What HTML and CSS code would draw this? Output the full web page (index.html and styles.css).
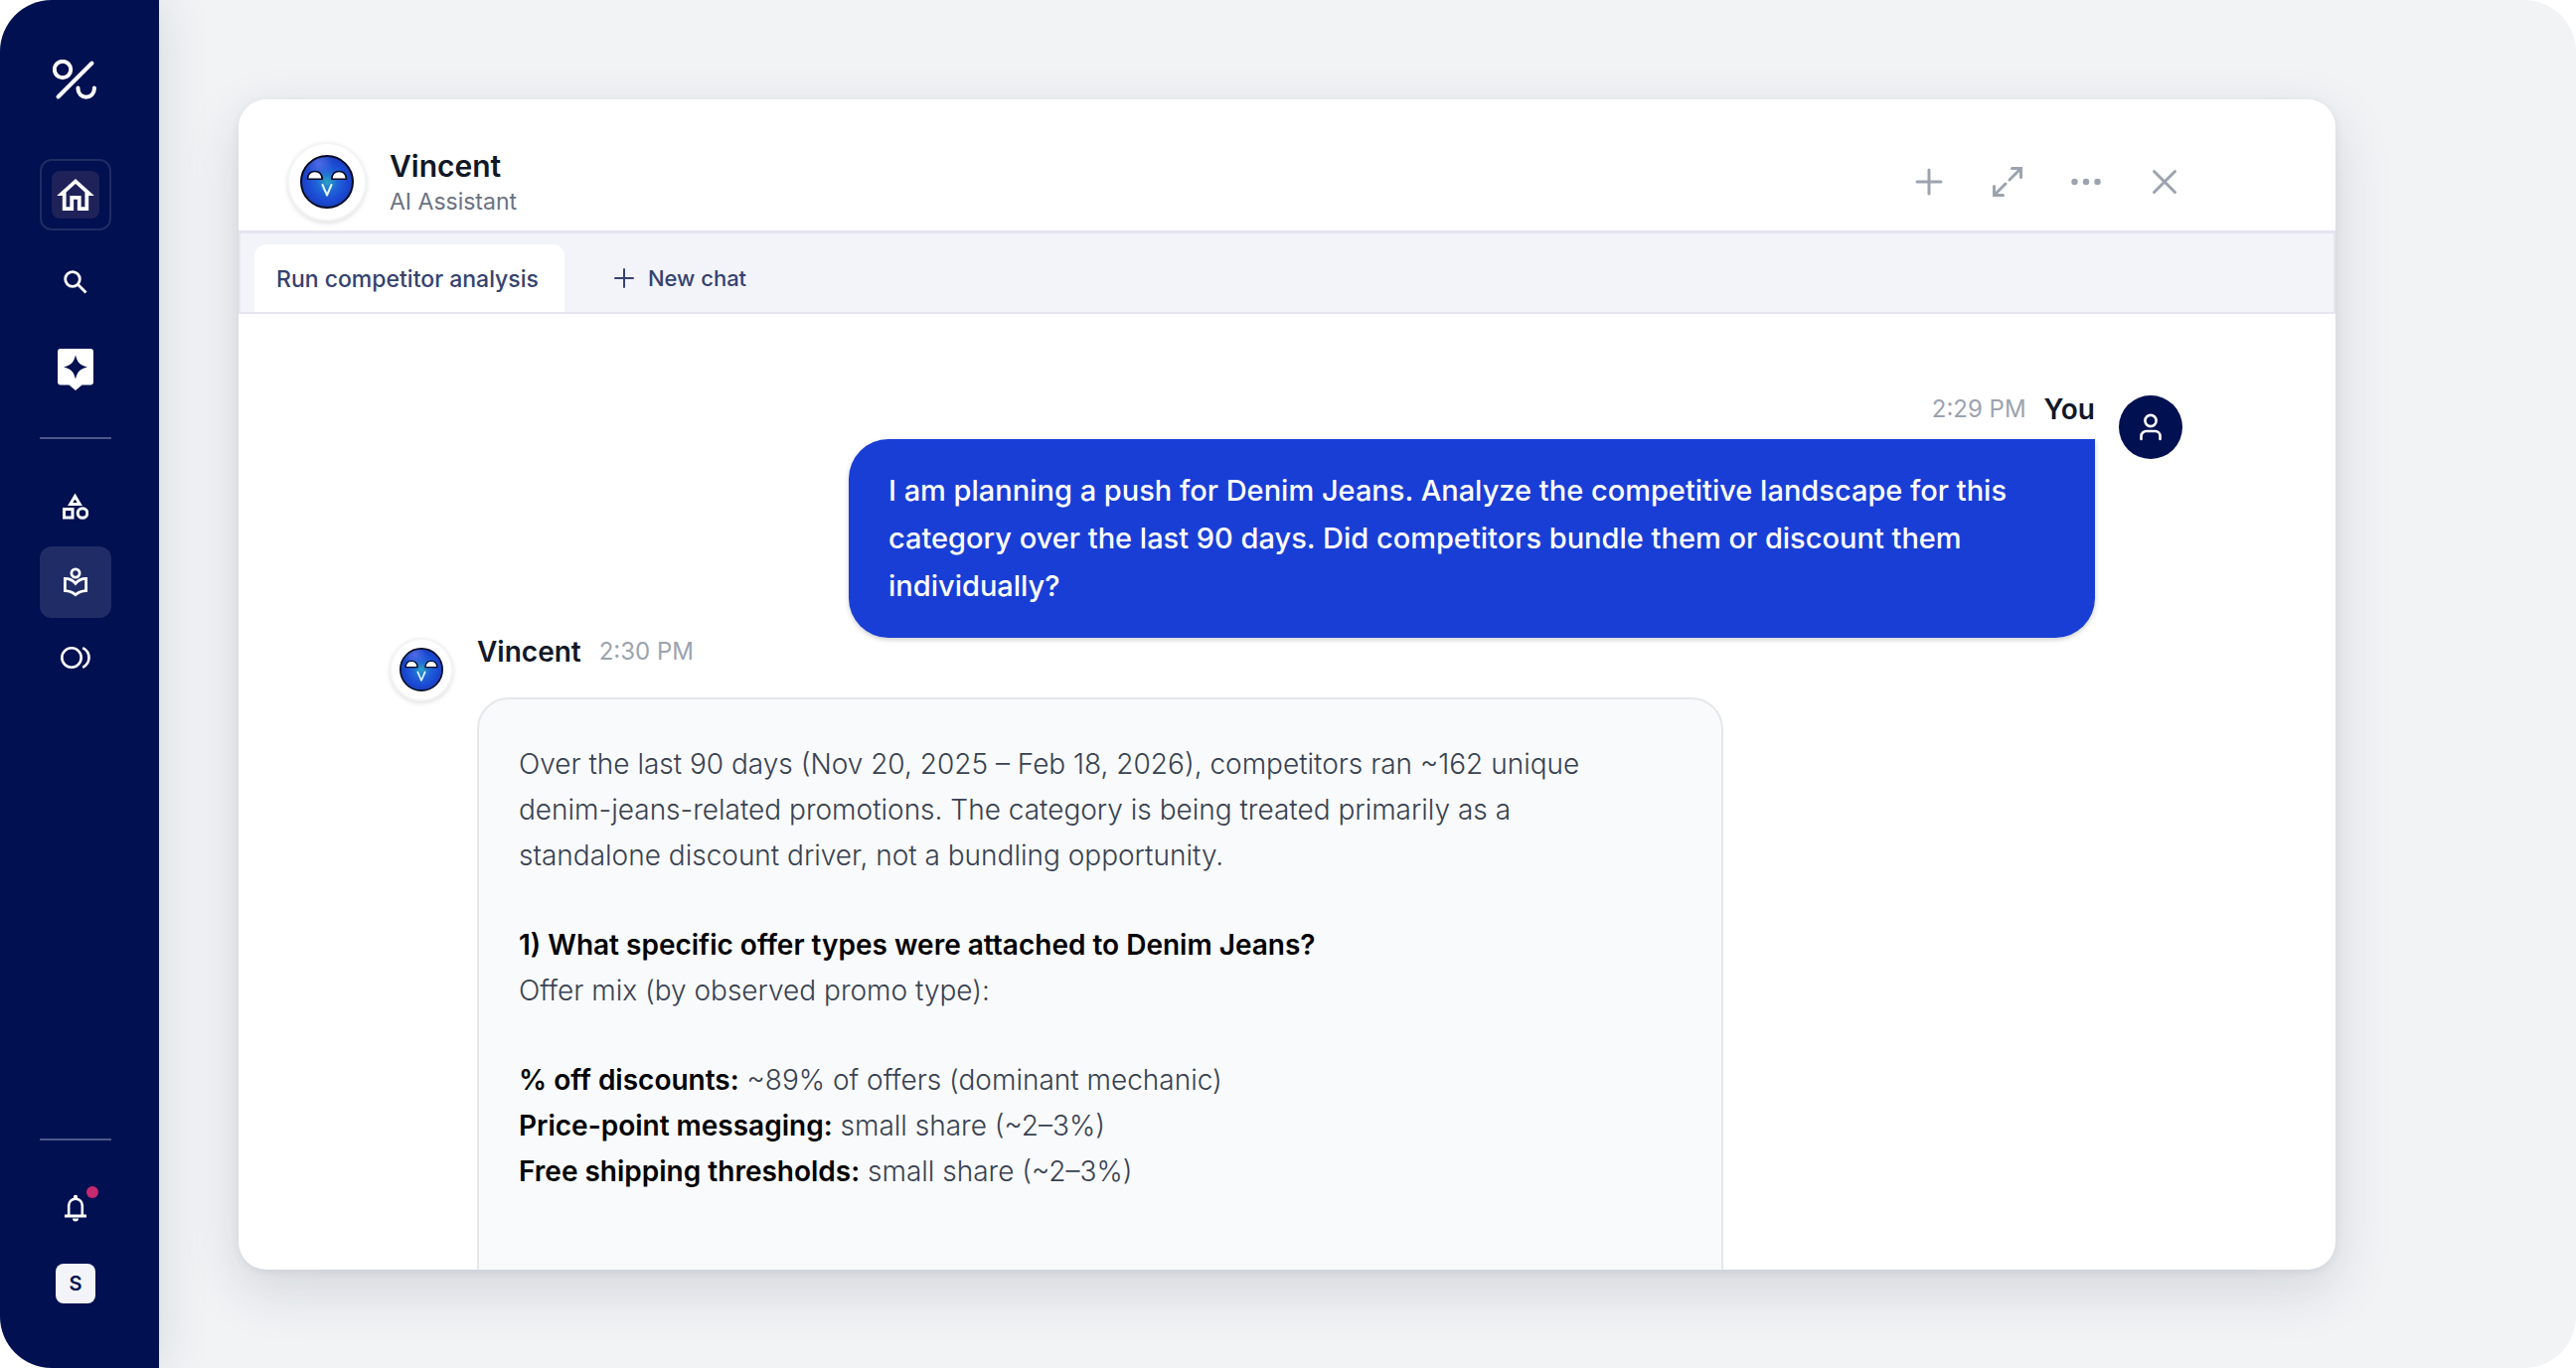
FILE: index.html
```html
<!DOCTYPE html>
<html lang="en">
<head>
<meta charset="utf-8">
<title>Vincent – AI Assistant</title>
<meta name="viewport" content="width=device-width, initial-scale=1">
<link rel="stylesheet" href="styles.css">
</head>
<body>
<svg class="defs" width="0" height="0" aria-hidden="true">
  <defs>
    <radialGradient id="face-fill" cx="50%" cy="50%" r="52%">
      <stop offset="0" stop-color="#2aa3c4"/>
      <stop offset="0.4" stop-color="#1f63d6"/>
      <stop offset="0.75" stop-color="#1a48d4"/>
      <stop offset="1" stop-color="#1a3fb4"/>
    </radialGradient>
    <radialGradient id="face-shine" cx="34%" cy="14%" r="28%">
      <stop offset="0" stop-color="#5d74ea" stop-opacity="0.8"/>
      <stop offset="1" stop-color="#5d74ea" stop-opacity="0"/>
    </radialGradient>
    <symbol id="face" viewBox="0 0 54 54">
      <circle cx="27" cy="27" r="26" fill="url(#face-fill)"/>
      <circle cx="27" cy="27" r="26" fill="url(#face-shine)" stroke="#050a24" stroke-width="2"/>
      <path d="M7.500 24.200c.3-4.900 3.200-7.700 7.300-7.700s7.100 2.800 7.400 7.700zM31.800 24.200c.3-4.900 3.200-7.700 7.300-7.700s7.100 2.800 7.400 7.700z" fill="#fff" stroke="#050a24" stroke-width="1.600" stroke-linejoin="round"/>
      <path d="M22.500 30l4.500 10.500L31.500 30" fill="none" stroke="#e4faff" stroke-width="2" stroke-linecap="round" stroke-linejoin="round"/>
    </symbol>
  </defs>
</svg>
<div class="app">
  <nav class="sidebar" aria-label="Main">
    <a class="logo" href="#" aria-label="Home page">
      <svg width="46" height="42" viewBox="1 1 46 42" fill="none" stroke="#fff" stroke-width="4" stroke-linecap="round"><circle cx="11" cy="11" r="8.200"/><path d="M40.500 4.500 6.500 38.500M26.500 29.500v1a8.200 8.200 0 0 0 16.400 0v-1"/></svg>
    </a>
    <a class="nav-item home" href="#" aria-label="Home">
      <span class="home-tile"><svg width="38" height="32" viewBox="2 3 20 17" fill="#fff"><path d="M12 5.690l5 4.500V18h-2v-6H9v6H7v-7.810l5-4.500M12 3L2 12h3v8h6v-6h2v6h6v-8h3L12 3z"/></svg></span>
    </a>
    <a class="nav-item search" href="#" aria-label="Search">
      <svg width="24" height="24" viewBox="0 0 24 24" fill="none" stroke="#fff" stroke-width="2.800"><circle cx="9" cy="9" r="7.300"/><path d="m14.500 14.500 8 8"/></svg>
    </a>
    <a class="nav-item spark" href="#" aria-label="Assistant">
      <svg width="36" height="42" viewBox="0 0 36 42"><path d="M3 0h30a3 3 0 0 1 3 3v30.500a3 3 0 0 1-3 3h-8.500L18 42l-6.500-5.500H3a3 3 0 0 1-3-3V3a3 3 0 0 1 3-3z" fill="#fff"/><path d="M18 6.500c2 7.500 4 9.700 12 12-8 2.300-10 4.500-12 12-2-7.500-4-9.700-12-12 8-2.300 10-4.500 12-12z" fill="#001050"/></svg>
    </a>
    <hr class="divider">
    <div class="nav-group">
      <a class="nav-item" href="#" aria-label="Categories">
        <svg width="26" height="28" viewBox="0 0 26 28" fill="none" stroke="#fff" stroke-width="3"><path d="M12.500 3.500 7.700 11.500h9.600zM1.500 16.500h8.500v8.500H1.500z"/><circle cx="20" cy="20.500" r="4.800"/></svg>
      </a>
      <a class="nav-item active" href="#" aria-label="Library">
        <svg width="24" height="30" viewBox="0 0 24 30" fill="none" stroke="#fff" stroke-width="2.800"><circle cx="12" cy="6" r="4.100"/><path d="M1.400 11.400c4.200 0 7.800 1.700 10.600 5 2.800-3.300 6.400-5 10.600-5v12.300c-4.200.2-7.800 1.600-10.600 4-2.800-2.400-6.400-3.800-10.600-4z"/></svg>
      </a>
      <a class="nav-item" href="#" aria-label="Overlap">
        <svg width="30" height="24" viewBox="0 0 30 24" fill="none" stroke="#fff" stroke-width="2.600"><circle cx="11" cy="12" r="9.700"/><path d="M22.200 2.200c3.900 2 6.300 5.500 6.300 9.800s-2.400 7.800-6.300 9.800"/></svg>
      </a>
    </div>
    <hr class="divider bottom">
    <a class="nav-item bell" href="#" aria-label="Notifications">
      <svg width="22" height="28" viewBox="0 0 22 28"><path d="M0 20.500h22v3H0zM8 24.500h6a3 3 0 0 1-6 0z" fill="#fff"/><path d="M4.200 21v-9.500a6.800 6.800 0 0 1 13.600 0V21" fill="none" stroke="#fff" stroke-width="2.600"/><circle cx="11" cy="3" r="2.200" fill="#fff"/></svg>
      <span class="dot"></span>
    </a>
    <button class="user" type="button" aria-label="Account">S</button>
  </nav>

  <main class="main">
    <section class="card">
      <header class="head">
        <span class="face large"><svg width="54" height="54" aria-hidden="true"><use href="#face"/></svg></span>
        <div class="who">
          <h1>Vincent</h1>
          <p>AI Assistant</p>
        </div>
        <div class="tools">
          <button type="button" aria-label="New"><svg width="32" height="32" viewBox="0 0 32 32"><path d="M16 4v24M4 16h24"/></svg></button>
          <button type="button" aria-label="Expand"><svg width="32" height="32" viewBox="0 0 32 32"><path d="M20.500 2.500h9v9M29 3 18 14M11.500 29.500h-9v-9M3 29l11-11"/></svg></button>
          <button type="button" aria-label="More"><svg class="dots" width="32" height="32" viewBox="0 0 32 32"><circle cx="4.500" cy="16" r="3.200"/><circle cx="16" cy="16" r="3.200"/><circle cx="27.500" cy="16" r="3.200"/></svg></button>
          <button type="button" aria-label="Close"><svg width="32" height="32" viewBox="0 0 32 32"><path d="m5.500 5.500 21 21M26.500 5.500l-21 21"/></svg></button>
        </div>
      </header>
      <div class="tabs">
        <button class="tab" type="button">Run competitor analysis</button>
        <button class="new" type="button"><svg width="20" height="20" viewBox="0 0 20 20"><path d="M10 1v18M1 10h18"/></svg>New chat</button>
      </div>
      <div class="chat">
        <article class="msg mine">
          <div class="body">
            <div class="meta"><time>2:29 PM</time><strong>You</strong></div>
            <p class="bubble">I am planning a push for Denim Jeans. Analyze the competitive landscape for this category over the last 90 days. Did competitors bundle them or discount them individually?</p>
          </div>
          <span class="me"><svg width="24" height="28" viewBox="0 0 24 28" fill="none" stroke="#fff" stroke-width="2.600" stroke-linecap="round"><circle cx="12" cy="7.500" r="5.600"/><path d="M2.500 26v-3a5 5 0 0 1 5-5h9a5 5 0 0 1 5 5v3"/></svg></span>
        </article>
        <article class="msg">
          <span class="face"><svg width="44" height="44" aria-hidden="true"><use href="#face"/></svg></span>
          <div class="body">
            <div class="meta"><strong>Vincent</strong><time>2:30 PM</time></div>
            <div class="answer">
              <p>Over the last 90 days (Nov 20, 2025 – Feb 18, 2026), competitors ran ~162 unique denim-jeans-related promotions. The category is being treated primarily as a standalone discount driver, not a bundling opportunity.</p>
              <div>
                <h2>1) What specific offer types were attached to Denim Jeans?</h2>
                <p>Offer mix (by observed promo type):</p>
              </div>
              <ul>
                <li><b>% off discounts:</b> ~89% of offers (dominant mechanic)</li>
                <li><b>Price-point messaging:</b> small share (~2–3%)</li>
                <li><b>Free shipping thresholds:</b> small share (~2–3%)</li>
              </ul>
            </div>
          </div>
        </article>
      </div>
    </section>
  </main>
</div>
</body>
</html>
```
FILE: styles.css
```css
* { box-sizing: border-box; margin: 0; padding: 0; }
body { background: #fff; font-family: Inter, "Liberation Sans", sans-serif; color: #111827; }
button { border: 0; background: none; font: inherit; cursor: pointer; }
a { text-decoration: none; }
svg { display: block; flex: none; }
.defs { position: absolute; }

.app { display: flex; height: 100vh; border-radius: 52px; overflow: hidden; background: #f1f3f5; }

/* Sidebar */
.sidebar {
  flex: none; width: 160px; padding: 60px 48px 65px 40px;
  display: flex; flex-direction: column; align-items: center;
  background: #001050; box-shadow: 0 0 48px rgba(40, 70, 70, 0.14);
}
.logo { height: 40px; margin-bottom: 60px; }
.nav-item {
  position: relative; flex: none; width: 72px; height: 72px; border-radius: 12px;
  display: flex; align-items: center; justify-content: center;
}
.home { border: 2px solid #1f2d66; }
.home-tile {
  width: 48px; height: 48px; border-radius: 8px; background: #1e2259;
  display: flex; align-items: center; justify-content: center;
}
.search { margin-top: 16px; }
.spark { margin-top: 16px; }
.divider { flex: none; width: 72px; height: 2px; border: 0; background: #4d588a; margin-top: 32px; }
.nav-group { margin-top: 32px; display: flex; flex-direction: column; gap: 4px; }
.active { background: #1f2c66; }
.bottom { margin-top: auto; }
.bell { margin-top: 32px; }
.dot {
  position: absolute; top: 14px; right: 13px; width: 12px; height: 12px;
  border-radius: 50%; background: #c5296e;
}
.user {
  flex: none; width: 40px; height: 40px; margin-top: 20px; border-radius: 8px;
  background: #f3f4f9; color: #001050; font-size: 20px; font-weight: 600;
}

/* Chat window */
.main { flex: 1; min-width: 0; padding: 100px 242px 99px 80px; display: flex; }
.card {
  flex: 1; min-width: 0; border-radius: 28px; overflow: hidden; background: #fff;
  display: flex; flex-direction: column;
  box-shadow: 0 20px 56px rgba(40, 50, 80, 0.15), 0 2px 8px rgba(40, 50, 80, 0.08);
}
.head {
  flex: none; height: 132px; padding: 34px 156px 0 49px;
  display: flex; align-items: center; gap: 23px;
}
.face {
  flex: none; width: 64px; height: 64px; border-radius: 50%; background: #fff;
  border: 2px solid #f3f4f6; box-shadow: 0 2px 5px rgba(0, 0, 0, 0.12);
  display: flex; align-items: center; justify-content: center;
}
.large { width: 80px; height: 80px; }
.who { padding-top: 3px; }
.who h1 { font-size: 30px; line-height: 36px; font-weight: 600; }
.who p { font-size: 23px; line-height: 36px; color: #6b7280; }
.tools { margin-left: auto; display: flex; gap: 47px; }
.tools svg { fill: none; stroke: #9ca3af; stroke-width: 3; stroke-linecap: round; }
.tools .dots { fill: #9ca3af; stroke: none; }
.tabs {
  flex: none; height: 84px; padding: 11px 14px 0; display: flex;
  background: #f3f4f9; border: 2px solid #e4e5ef; border-top-width: 3px;
}
.tab, .new { font-weight: 500; color: #35426f; }
.tab { padding: 2px 26px 0 22px; border-radius: 12px 12px 0 0; background: #fff; font-size: 23px; }
.new { display: flex; align-items: center; gap: 14px; margin-left: 50px; font-size: 22px; }
.new svg { stroke: #35426f; stroke-width: 2; stroke-linecap: round; }

.chat { flex: 1; min-height: 0; overflow: hidden; padding: 82px 154px 0 152px; }
.msg { display: flex; gap: 24px; }
.mine { justify-content: flex-end; }
.body { flex: 0 1 1254px; min-width: 0; }
.meta { display: flex; align-items: center; gap: 18px; height: 28px; margin-bottom: 32px; }
.meta strong { font-size: 28px; line-height: 28px; font-weight: 600; }
.meta time { font-size: 24px; line-height: 28px; color: #9ca3af; }
.mine .meta { justify-content: flex-end; margin-bottom: 16px; }
.bubble {
  padding: 28px 40px; border-radius: 40px 0 40px 40px; background: #193ed6; color: #fff;
  font-size: 29px; line-height: 48px; font-weight: 500; box-shadow: 0 2px 5px rgba(0, 0, 0, 0.2);
}
.me {
  flex: none; width: 64px; height: 64px; border-radius: 50%; background: #001050;
  display: flex; align-items: center; justify-content: center;
}
.answer {
  min-height: 640px; padding: 42px 100px 42px 40px; border: 2px solid #e5e7eb; border-radius: 32px;
  background: #f9fafb; display: flex; flex-direction: column; gap: 44px;
  font-size: 28px; line-height: 46px; font-weight: 300; color: #374151;
}
.answer h2, .answer b { font-size: 28px; font-weight: 600; color: #000; }
.answer ul { list-style: none; }
```
